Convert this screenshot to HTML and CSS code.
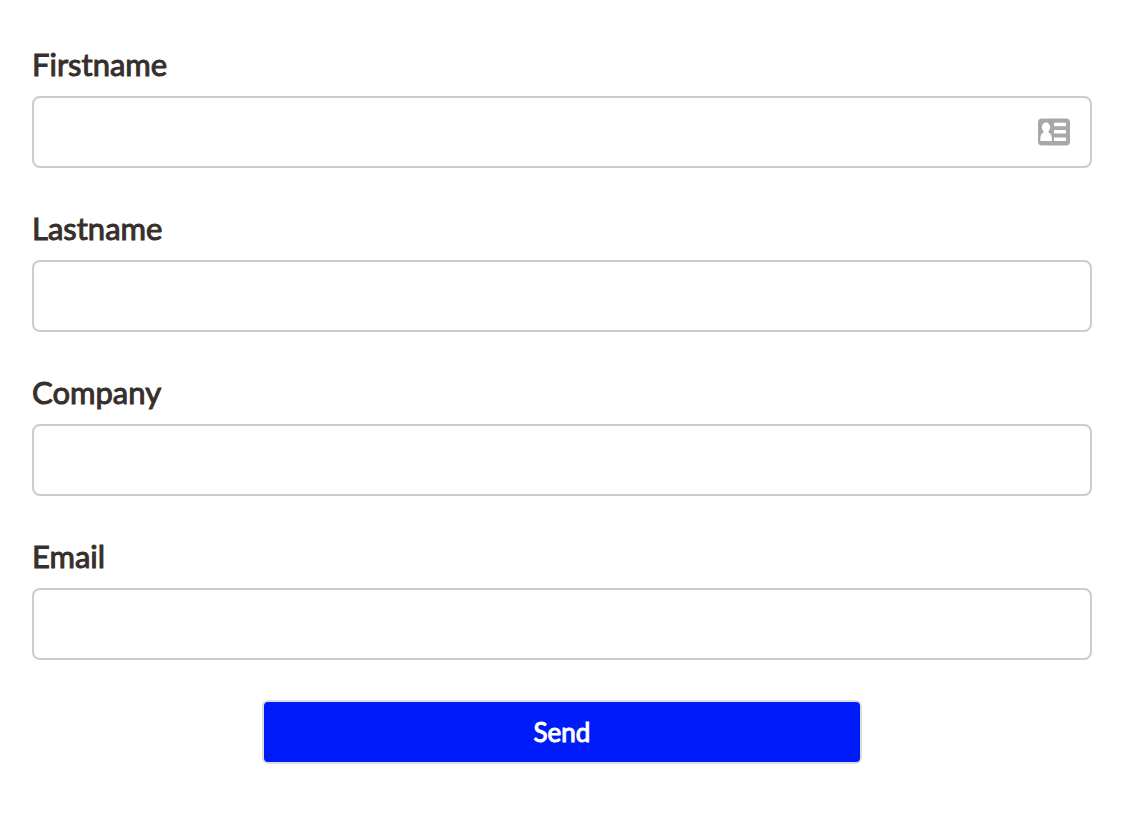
FILE: index.html
```html
<!DOCTYPE html>
<html lang="en">
<head>
    <meta charset="UTF-8">
    <meta name="viewport" content="width=device-width, initial-scale=1.0">
    <title>Contact Form</title>
    <link rel="stylesheet" href="styles.css">
</head>
<body>

    <form class="contact-form">
        <div class="form-field">
            <label for="firstname">Firstname</label>
            <div class="input-wrap">
                <input type="text" id="firstname" name="firstname">
                <svg class="contact-icon" viewBox="0 0 32 28" aria-hidden="true">
                    <rect y="0.5" width="32" height="27" rx="4" fill="#a8a8a8"/>
                    <g fill="#fff">
                        <ellipse cx="8" cy="9.3" rx="4.200" ry="4.700"/>
                        <path d="M5.500 12h5v2.500c2.500 1 3.500 3 3.500 8.500H2.300c0-5.500 1-7.500 3.200-8.500z"/>
                        <rect x="16" y="4.700" width="12" height="3.500"/>
                        <rect x="16" y="12" width="12" height="3.500"/>
                        <rect x="16" y="19.500" width="12" height="3.500"/>
                    </g>
                </svg>
            </div>
        </div>

        <div class="form-field">
            <label for="lastname">Lastname</label>
            <input type="text" id="lastname" name="lastname">
        </div>

        <div class="form-field">
            <label for="company">Company</label>
            <input type="text" id="company" name="company">
        </div>

        <div class="form-field">
            <label for="email">Email</label>
            <input type="email" id="email" name="email">
        </div>

        <button type="submit" class="send-button">Send</button>
    </form>

</body>
</html>
```
FILE: styles.css
```css
* {
    box-sizing: border-box;
}

body {
    font-family: Lato, sans-serif;
    margin: 0;
    background-color: #fff;
    color: #362f2b;
}

.contact-form {
    display: flex;
    flex-direction: column;
    gap: 40px;
    padding: 44px 40px 50px 32px;
}

.form-field {
    display: flex;
    flex-direction: column;
    gap: 12px;
}

label {
    font-size: 31px;
    line-height: 40px;
    -webkit-text-stroke: 1px currentColor;
}

input {
    display: block;
    width: 100%;
    height: 72px;
    padding: 0 20px;
    border: 2px solid #ccc;
    border-radius: 8px;
    background-color: #fff;
    color: inherit;
    font-family: inherit;
    font-size: 31px;
}

.input-wrap {
    position: relative;
}

.input-wrap input {
    padding-right: 64px;
}

/* sits over the right end of the input */
.contact-icon {
    position: absolute;
    top: 22px;
    right: 22px;
    width: 32px;
    height: 28px;
}

.send-button {
    align-self: center;
    width: 100%;
    max-width: 600px;
    height: 64px;
    border: 2px solid #ddd;
    border-radius: 6px;
    background-color: #001bf9;
    color: #fff;
    font-family: inherit;
    font-size: 26px;
    -webkit-text-stroke: 1px currentColor;
    cursor: pointer;
}
```
